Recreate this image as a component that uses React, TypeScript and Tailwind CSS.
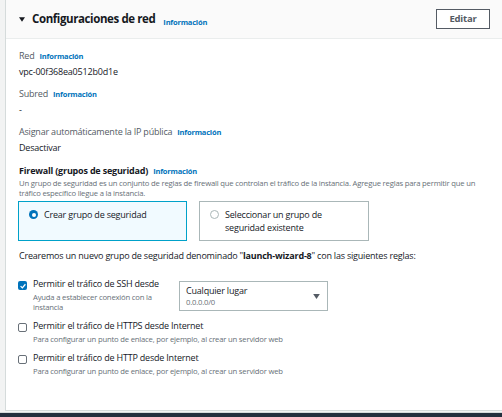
import React from "react";

function Info() {
  return <span className="ml-[5px] text-[7.5px] font-bold text-[#0073bb]">Información</span>;
}

function Checkbox({ checked }: { checked?: boolean }) {
  return checked ? (
    <span className="flex h-[9px] w-[9px] shrink-0 items-center justify-center rounded-[2px] bg-[#0073bb]">
      <svg viewBox="0 0 10 10" className="h-[8px] w-[8px]">
        <path d="M2 5.2 L4.2 7.3 L8 2.8" fill="none" stroke="white" strokeWidth="1.6" />
      </svg>
    </span>
  ) : (
    <span className="block h-[9px] w-[9px] shrink-0 rounded-[2px] border border-[#687078] bg-white" />
  );
}

function Rule({ checked, title, desc }: { checked?: boolean; title: string; desc: React.ReactNode }) {
  return (
    <div className="flex gap-[6px]">
      <div className="pt-[3px]">
        <Checkbox checked={checked} />
      </div>
      <div>
        <div className="text-[9px] leading-[12px] text-[#16191f]">{title}</div>
        <div className="mt-[2px] text-[7.7px] leading-[10px] text-[#687078]">{desc}</div>
      </div>
    </div>
  );
}

export default function App() {
  return (
    <div className="flex h-[417px] w-[502px] flex-col bg-[#f2f3f3] font-['Open_Sans',sans-serif] tracking-[-0.2px]">
      <div className="flex flex-1 pl-[5px] pb-[1px]">
        <div className="flex flex-1 flex-col border-b border-l border-[#d5dbdb] bg-white">
          <div className="flex h-[39px] items-center border-b border-[#eaeded] bg-[#fafafa] pl-[13px] pr-[12px]">
            <svg viewBox="0 0 8 6" className="mr-[7px] h-[5px] w-[6px]">
              <path d="M0 0 H8 L4 6 Z" fill="#16191f" />
            </svg>
            <span className="text-[11.5px] font-bold tracking-[-0.4px] text-[#16191f]">Configuraciones de red</span>
            <span className="ml-[3px]">
              <Info />
            </span>
            <button className="ml-auto h-[20px] w-[54px] border border-[#545b64] bg-white text-[9.5px] font-bold text-[#545b64]">
              Editar
            </button>
          </div>

          <div className="flex flex-col pl-[13px] pr-[12px] pt-[11px] text-[9px] text-[#16191f]">
            <div className="leading-[12px]">
              <span className="text-[#545b64]">Red</span>
              <Info />
            </div>
            <div className="mt-[4px] leading-[12px]">vpc-00f368ea0512b0d1e</div>

            <div className="mt-[10px] leading-[12px]">
              <span className="text-[#545b64]">Subred</span>
              <Info />
            </div>
            <div className="mt-[4px] leading-[12px]">-</div>

            <div className="mt-[10px] leading-[12px]">
              <span className="text-[#545b64]">Asignar automáticamente la IP pública</span>
              <Info />
            </div>
            <div className="mt-[4px] leading-[12px]">Desactivar</div>

            <div className="mt-[11px] leading-[12px]">
              <span className="font-bold">Firewall (grupos de seguridad)</span>
              <Info />
            </div>
            <div className="mt-[1px] text-[7.7px] leading-[10px] text-[#687078]">
              Un grupo de seguridad es un conjunto de reglas de firewall que controlan el tráfico de la instancia. Agregue reglas para permitir que un tráfico específico llegue a la instancia.
            </div>

            <div className="-ml-[1px] mt-[3px] flex gap-[12px]">
              <div className="flex h-[40px] w-[169px] items-start gap-[6px] border border-[#00a1c9] bg-[#f1faff] px-[10px] pt-[6px]">
                <span className="mt-[2px] flex h-[9px] w-[9px] shrink-0 items-center justify-center rounded-full bg-[#0073bb]">
                  <span className="h-[4px] w-[4px] rounded-full bg-white" />
                </span>
                <span className="leading-[13px]">Crear grupo de seguridad</span>
              </div>
              <div className="flex h-[40px] w-[170px] items-start gap-[6px] border border-[#aab7b8] bg-white px-[10px] pt-[6px]">
                <span className="mt-[2px] h-[9px] w-[9px] shrink-0 rounded-full border border-[#aab7b8] bg-white" />
                <span className="leading-[13px]">Seleccionar un grupo de seguridad existente</span>
              </div>
            </div>

            <div className="mt-[9px] leading-[12px]">
              Crearemos un nuevo grupo de seguridad denominado "<span className="font-bold">launch-wizard-8</span>" con las siguientes reglas:
            </div>

            <div className="-ml-[1px] mt-[16px] flex">
              <div className="w-[161px]">
                <Rule
                  checked
                  title="Permitir el tráfico de SSH desde"
                  desc={<>Ayuda a establecer conexión con la<br />instancia</>}
                />
              </div>
              <div className="mt-[3px] flex h-[30px] w-[149px] items-center border border-[#aab7b8] pl-[6px] pr-[7px]">
                <div className="flex-1">
                  <div className="text-[9px] leading-[12px]">Cualquier lugar</div>
                  <div className="text-[7.7px] leading-[11px] text-[#687078]">0.0.0.0/0</div>
                </div>
                <svg viewBox="0 0 8 6" className="h-[5px] w-[7px]">
                  <path d="M0 0 H8 L4 6 Z" fill="#545b64" />
                </svg>
              </div>
            </div>

            <div className="-ml-[1px] mt-[8px]">
              <Rule title="Permitir el tráfico de HTTPS desde Internet" desc="Para configurar un punto de enlace, por ejemplo, al crear un servidor web" />
            </div>
            <div className="-ml-[1px] mt-[8px]">
              <Rule title="Permitir el tráfico de HTTP desde Internet" desc="Para configurar un punto de enlace, por ejemplo, al crear un servidor web" />
            </div>
          </div>
        </div>
      </div>
      <div className="h-[5px] border-t border-[#d5dbdb] bg-[#232f3e]" />
    </div>
  );
}
